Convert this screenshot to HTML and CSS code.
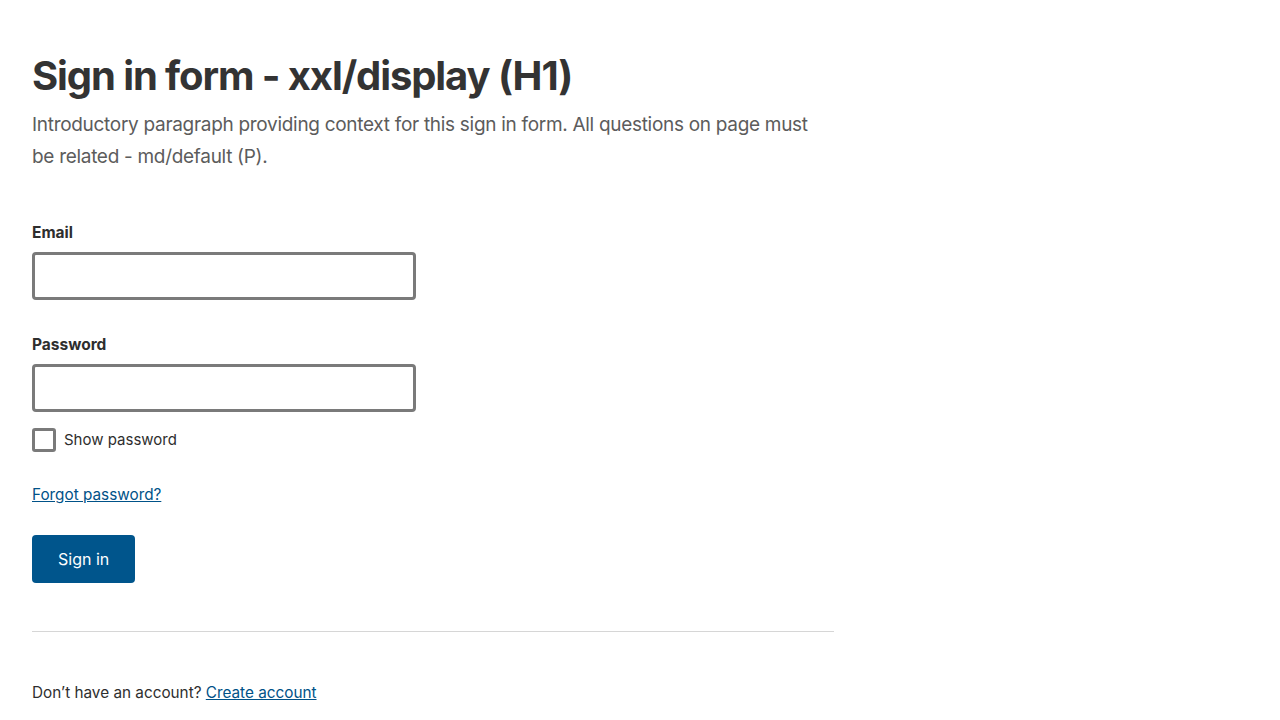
FILE: index.html
```html
<!DOCTYPE html>
<html lang="en">
<head>
<meta charset="utf-8">
<title>Sign in</title>
<link rel="stylesheet" href="styles.css">
</head>
<body>
<main class="page">
  <h1 class="title">Sign in form - xxl/display (H1)</h1>
  <p class="intro">Introductory paragraph providing context for this sign in form. All questions on page must be related - md/default (P).</p>
  <form class="form">
    <div class="field">
      <label class="label" for="email">Email</label>
      <input class="input" id="email" type="email">
    </div>
    <div class="field">
      <label class="label" for="password">Password</label>
      <input class="input" id="password" type="password">
    </div>
    <label class="check">
      <span class="box"></span>
      <span class="check-text">Show password</span>
    </label>
    <a class="link forgot" href="#">Forgot password?</a>
    <div class="actions"><button class="btn" type="button">Sign in</button></div>
  </form>
  <hr class="divider">
  <p class="footer">Don’t have an account? <a class="link" href="#">Create account</a></p>
</main>
</body>
</html>
```

FILE: styles.css
```css
* { box-sizing: border-box; }
html, body { margin: 0; padding: 0; background: #fff; }
body {
  font-family: Inter, "Noto Sans", sans-serif;
  color: #2e2e2e;
}
.page {
  padding: 52px 32px 0 32px;
  max-width: 866px;
}
.title {
  margin: 0;
  font-size: 40px;
  line-height: 48px;
  font-weight: 700;
  color: #333;
  letter-spacing: -1.1px;
}
.intro {
  margin: 9px 0 0 0;
  font-size: 19px;
  line-height: 32px;
  color: #5c5c5c;
  letter-spacing: -0.3px;
  max-width: 800px;
}
.form {
  display: flex;
  flex-direction: column;
  align-items: flex-start;
  margin-top: 50px;
}
.field {
  display: flex;
  flex-direction: column;
  margin-bottom: 35px;
}
.field + .field { margin-bottom: 16px; }
.label {
  font-size: 15.5px;
  line-height: 20px;
  font-weight: 700;
  color: #2e2e2e;
  margin-bottom: 9px;
}
.input {
  width: 384px;
  height: 48px;
  border: 3px solid #7a7a7a;
  border-radius: 4px;
  background: #fff;
  font: inherit;
  padding: 0 12px;
}
.check {
  display: flex;
  align-items: center;
  gap: 8px;
  font-size: 15px;
  line-height: 24px;
  color: #2e2e2e;
}
.box {
  width: 24px;
  height: 24px;
  border: 3px solid #7a7a7a;
  border-radius: 3px;
}
.link {
  color: #005288;
  text-decoration: underline;
}
.forgot {
  margin-top: 33px;
  font-size: 15.3px;
  line-height: 20px;
}
.actions { margin-top: 30px; }
.btn {
  height: 48px;
  padding: 0 26px;
  border: 0;
  border-radius: 4px;
  background: #00558c;
  color: #fff;
  font-family: inherit;
  font-size: 16px;
  cursor: pointer;
}
.divider {
  margin: 48px 0 0 0;
  border: 0;
  border-top: 1px solid #d6d6d6;
  width: 802px;
}
.footer {
  margin: 51px 0 0 0;
  font-size: 15.3px;
  line-height: 20px;
}
```
